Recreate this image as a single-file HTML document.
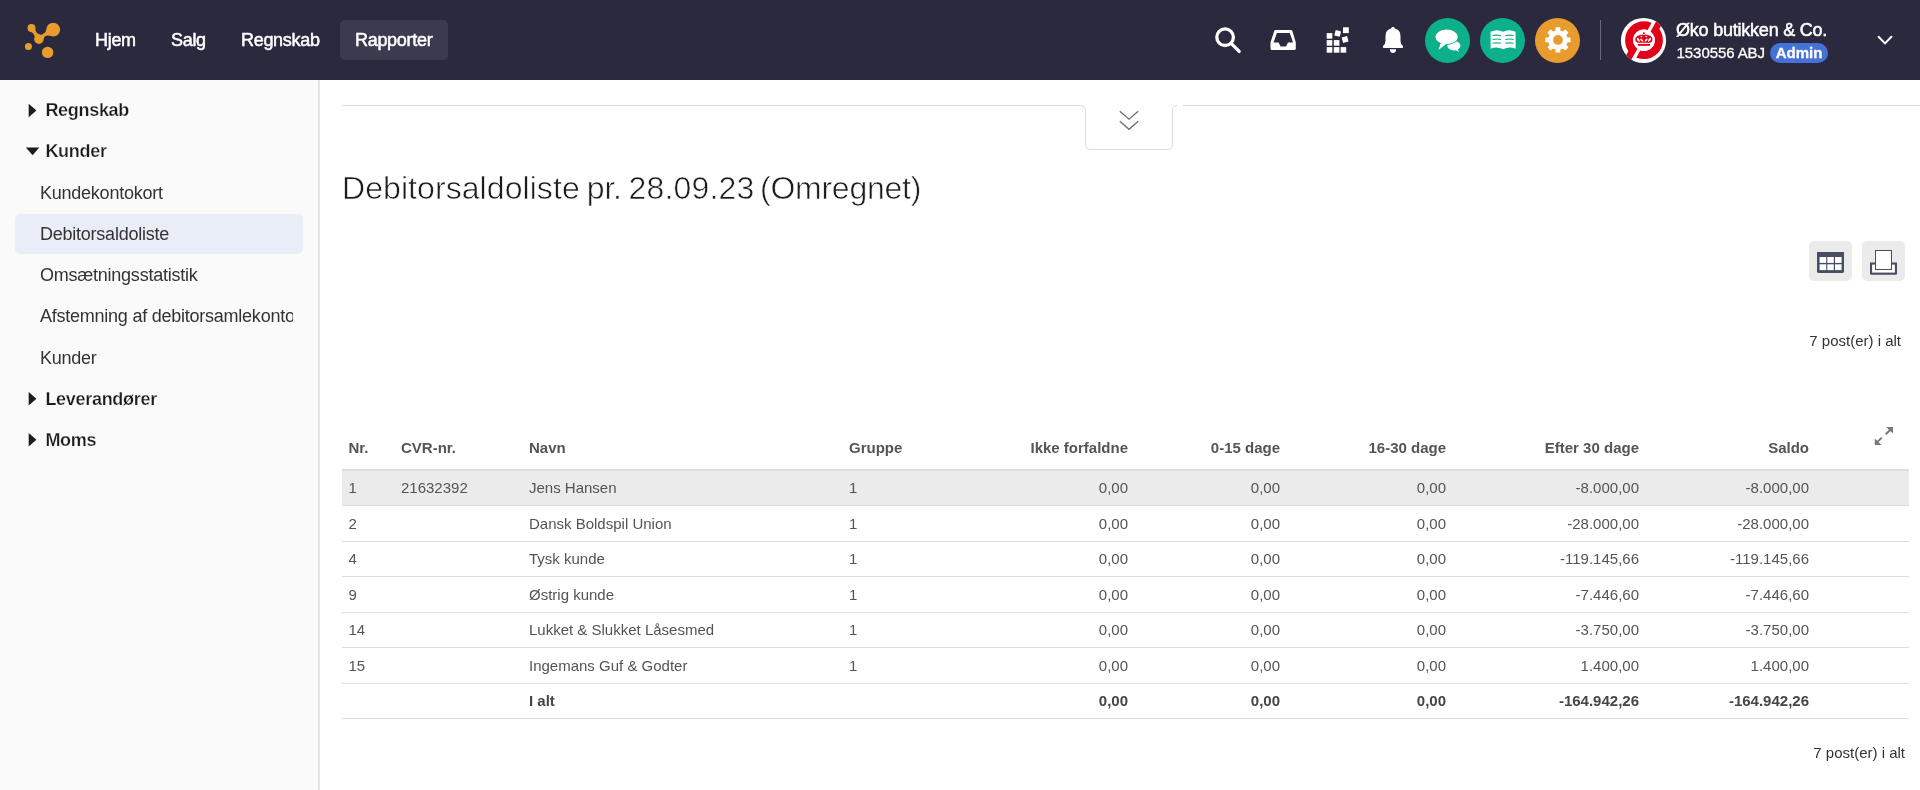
<!DOCTYPE html>
<html lang="da">
<head>
<meta charset="utf-8">
<title>Debitorsaldoliste</title>
<style>
*{box-sizing:border-box;margin:0;padding:0}
html,body{width:1920px;height:790px;overflow:hidden;background:#fff}
body{font-family:"Liberation Sans",Arial,sans-serif;color:#333;font-size:15px;position:relative}
#page{position:absolute;left:0;top:0;width:1920px;height:790px;overflow:hidden;background:#fff;will-change:transform}
.abs{position:absolute}
svg{position:absolute;display:block;overflow:visible}
#top{position:absolute;left:0;top:0;width:1920px;height:80px;background:#2b293e}
#top .nav{position:absolute;top:20px;height:40px;line-height:40px;color:#fff;font-size:18px;letter-spacing:-0.3px;white-space:nowrap;-webkit-text-stroke:0.5px #fff}
#top .nav.act{background:#3c3a4e;border-radius:5px}
.circ{position:absolute;top:18px;width:45px;height:45px;border-radius:50%}
#side{position:absolute;left:0;top:80px;width:320px;height:710px;background:#fafafa;border-right:2px solid #e4e4e4}
#side .h{position:absolute;left:45.4px;font-weight:bold;font-size:18px;color:#1c1c1c;-webkit-text-stroke:0.25px #fafafa;line-height:20px;white-space:nowrap;letter-spacing:-0.3px}
#side .i{position:absolute;left:40px;font-size:18px;color:#333;line-height:20px;white-space:nowrap;letter-spacing:-0.24px}
#side .sel{position:absolute;left:15px;top:134px;width:288px;height:40px;background:#e9edf7;border-radius:5px}
h1{position:absolute;left:342px;top:168px;font-weight:normal;font-size:32px;line-height:40px;color:#1c1c1c;white-space:nowrap;letter-spacing:-0.2px;-webkit-text-stroke:0.6px #fff}
.btn{position:absolute;top:241px;width:43px;height:40px;border-radius:5px;background:#ebebeb}
table{position:absolute;left:342px;top:427px;width:1567px;border-collapse:collapse;font-size:15px;color:#545454}
th{font-weight:bold;text-align:left;height:43px;padding:0 7px 2px;vertical-align:middle;border-bottom:2px solid #ddd;color:#555}
td{height:35.5px;padding:0 7px;vertical-align:middle;border-bottom:1px solid #ddd}
.r{text-align:right}
td.f{padding-left:6.5px}
tr.hl td{background:#ebebeb;padding-bottom:2px}
tr.tot td{font-weight:bold;color:#464646}
.cnt{position:absolute;font-size:15px;line-height:20px;color:#333;white-space:nowrap}
h1 span{position:absolute;top:0;left:0}
</style>
</head>
<body>
<div id="page">
<div id="top">
  <svg style="left:0;top:0" width="80" height="80" viewBox="0 0 80 80"><g fill="#e99c2e">
    <circle cx="31.5" cy="28" r="4"/>
    <circle cx="53.2" cy="29.7" r="6.9"/>
    <circle cx="38.9" cy="39.2" r="4.7"/>
    <circle cx="28.4" cy="46.4" r="3.5"/>
    <circle cx="47.6" cy="52.4" r="5.7"/>
    <path d="M35.1 28.7 Q35.8 33.6 40.8 34.9 L38.9 39.2 L34.6 39 Q35.4 33.8 30.2 31.5Z"/>
    <path d="M46.9 28.7 Q45.6 33.6 40.8 34.9 L38.9 39.2 L43.6 39 Q44.6 34.6 50.4 35.9Z"/>
  </g></svg>
  <div class="nav" style="left:95px">Hjem</div>
  <div class="nav" style="left:171px">Salg</div>
  <div class="nav" style="left:241px">Regnskab</div>
  <div class="nav act" style="left:340px;width:108px;padding-left:15px">Rapporter</div>
  <svg style="left:1200px;top:0" width="220" height="80" viewBox="1200 0 220 80">
    <g fill="none" stroke="#fff" stroke-width="3.3" stroke-linecap="round">
      <circle cx="1225.1" cy="37.2" r="8.3"/>
      <path d="M1231.4 43.6 L1239.2 51.4"/>
    </g>
    <path fill="#fff" fill-rule="evenodd" d="M1275.6 29.9 H1291 Q1292 29.9 1292.4 30.9 L1295.8 42.6 V48.6 Q1295.8 50.1 1294.3 50.1 H1272 Q1270.5 50.1 1270.5 48.6 V42.6 L1274.2 30.9 Q1274.6 29.9 1275.6 29.9Z M1276.9 33 L1273.6 42.4 H1278.6 L1280.6 46.6 H1286 L1288 42.4 H1293 L1289.8 33Z"/>
    <g fill="#fff">
      <rect x="1326.7" y="33.1" width="5.6" height="5.6"/>
      <rect x="1326.7" y="40.1" width="5.6" height="5.6"/>
      <rect x="1333.8" y="40.1" width="5.6" height="5.6"/>
      <rect x="1326.7" y="47.1" width="5.6" height="5.6"/>
      <rect x="1333.8" y="47.1" width="5.6" height="5.6"/>
      <rect x="1340.6" y="47.1" width="5.6" height="5.6"/>
      <rect x="1343" y="27.3" width="5.8" height="5.8"/>
      <rect x="-2.8" y="-2.8" width="5.6" height="5.6" transform="translate(1337.7 33.4) rotate(15)"/>
      <rect x="-2.8" y="-2.8" width="5.6" height="5.6" transform="translate(1345.1 39.5) rotate(-15)"/>
      <path d="M1393 26.8 Q1394.6 26.8 1394.8 28.6 Q1400.5 30 1400.5 36 V41 Q1400.5 44.5 1403 46 Q1403.6 47.9 1402.2 47.9 H1383.8 Q1382.4 47.9 1383 46 Q1385.5 44.5 1385.5 41 V36 Q1385.5 30 1391.2 28.6 Q1391.4 26.8 1393 26.8Z"/>
      <path d="M1389.8 49.3 H1396.2 Q1396 52.9 1393 52.9 Q1390 52.9 1389.8 49.3Z"/>
    </g>
  </svg>
  <div class="circ" style="left:1425px;background:#0cb08b"></div>
  <div class="circ" style="left:1480px;background:#0cb08b"></div>
  <div class="circ" style="left:1535px;background:#e99c2e"></div>
  <svg style="left:1420px;top:0" width="170" height="80" viewBox="1420 0 170 80">
    <g fill="#fff">
      <ellipse cx="1453.9" cy="45.7" rx="6.6" ry="4.7"/>
      <path d="M1454.6 49.4 L1459 52 L1457 48Z"/>
      <ellipse cx="1446.6" cy="37" rx="11.8" ry="7.9" fill="#0cb08b"/>
      <ellipse cx="1446.6" cy="36.8" rx="11.2" ry="7.3"/>
      <path d="M1441 42.5 L1438.4 50 L1447 43.5Z"/>
      <path d="M1490.6 31.8 Q1497 28.6 1503.1 31.8 Q1509.2 28.6 1515.6 31.8 V48.7 Q1509.2 46.2 1503.1 49.3 Q1497 46.2 1490.6 48.7Z"/>
    </g>
    <g fill="none" stroke="#0cb08b" stroke-width="1.15">
      <path d="M1492.6 35.7 Q1496.8 34.7 1501 35.7 M1492.6 39.5 Q1496.8 38.5 1501 39.5 M1492.6 43.3 Q1496.8 42.3 1501 43.3"/>
      <path d="M1505.2 35.7 Q1509.4 34.7 1513.6 35.7 M1505.2 39.5 Q1509.4 38.5 1513.6 39.5 M1505.2 43.3 Q1509.4 42.3 1513.6 43.3"/>
    </g>
    <g transform="translate(1557.95 39.95)">
      <circle r="7.3" fill="none" stroke="#fff" stroke-width="5"/>
      <g fill="#fff">
        <rect x="-2.4" y="-12.6" width="4.8" height="25.2" rx="0.6"/>
        <rect x="-2.4" y="-12.6" width="4.8" height="25.2" rx="0.6" transform="rotate(45)"/>
        <rect x="-2.4" y="-12.6" width="4.8" height="25.2" rx="0.6" transform="rotate(90)"/>
        <rect x="-2.4" y="-12.6" width="4.8" height="25.2" rx="0.6" transform="rotate(135)"/>
      </g>
      <circle r="4.9" fill="#e99c2e"/>
    </g>
  </svg>
  <div class="abs" style="left:1600px;top:20px;width:1px;height:40px;background:#6b6a7a"></div>
  <svg style="left:1621px;top:18px" width="45" height="45" viewBox="0 0 45 45">
    <defs><clipPath id="av"><circle cx="22.5" cy="22.5" r="22.6"/></clipPath></defs>
    <circle cx="22.5" cy="22.5" r="22.6" fill="#fff"/>
    <g clip-path="url(#av)">
      <path d="M31 17.3 L41.6 -2.2" stroke="#e2001a" stroke-width="6.8" fill="none"/>
      <path d="M14.6 27 L4 46.6" stroke="#e2001a" stroke-width="6.8" fill="none"/>
      <circle cx="23" cy="22.2" r="14.85" fill="none" stroke="#e2001a" stroke-width="8.1"/>
      <path d="M35.1 0 L10.9 44.4" stroke="#fff" stroke-width="3.3"/>
      <circle cx="23" cy="22.2" r="10.8" fill="#fff"/>
      <g fill="#e2001a">
        <rect x="16.75" y="25.9" width="12.3" height="1.9"/>
        <path d="M16.4 24.7 Q13.6 22.6 14.3 20.2 Q15.4 17.4 19 17 Q21.4 16.2 22.9 17 Q24.4 16.2 26.8 17 Q30.4 17.4 31.5 20.2 Q32.2 22.6 29.4 24.7Z"/>
        <circle cx="22.85" cy="15.3" r="1"/>
      </g>
      <g fill="#fff">
        <path d="M16.2 19.6 Q14.8 22.4 18.5 23.9 Q19.4 21.4 16.2 19.6Z"/>
        <path d="M29.6 19.6 Q31 22.4 27.3 23.9 Q26.4 21.4 29.6 19.6Z"/>
        <path d="M19.3 20.5 Q18.8 22.8 22.1 23.7 Q22.4 21.2 19.3 20.5Z"/>
        <path d="M26.5 20.5 Q27 22.8 23.7 23.7 Q23.4 21.2 26.5 20.5Z"/>
        <ellipse cx="20.4" cy="18.55" rx="1.1" ry="0.6"/>
        <ellipse cx="25.3" cy="18.55" rx="1.1" ry="0.6"/>
      </g>
    </g>
  </svg>
  <div class="abs" style="left:1676px;top:19px;font-size:18px;line-height:22px;color:#fff;letter-spacing:-0.22px;-webkit-text-stroke:0.5px #fff;white-space:nowrap">Øko butikken &amp; Co.</div>
  <div class="abs" style="left:1676.6px;top:43px;font-size:15px;line-height:20px;color:#fff;letter-spacing:-0.08px;-webkit-text-stroke:0.3px #fff;white-space:nowrap">1530556 ABJ</div>
  <div class="abs" style="left:1770px;top:43px;width:58px;height:20px;border-radius:10px;background:#4472d6;color:#fff;font-weight:bold;font-size:15px;line-height:20px;text-align:center;white-space:nowrap;-webkit-text-stroke:0.3px #fff">Admin</div>
  <svg style="left:1870px;top:30px" width="30" height="20" viewBox="1870 30 30 20"><path d="M1878.6 36.8 L1885 43.4 L1891.4 36.8" fill="none" stroke="#fff" stroke-width="2" stroke-linecap="round" stroke-linejoin="miter"/></svg>
</div>
<div id="side">
  <svg style="left:0;top:0" width="60" height="380" viewBox="0 80 60 380"><g fill="#1c1c1c">
    <path d="M28.7 103.8 L36.4 110.5 L28.7 117.2Z"/>
    <path d="M25.9 147.6 L39.3 147.6 L32.6 155.2Z"/>
    <path d="M28.7 392.1 L36.4 398.8 L28.7 405.5Z"/>
    <path d="M28.7 433.1 L36.4 439.8 L28.7 446.5Z"/>
  </g></svg>
  <div class="h" style="top:20px">Regnskab</div>
  <div class="h" style="top:61px">Kunder</div>
  <div class="sel"></div>
  <div class="i" style="top:103px">Kundekontokort</div>
  <div class="i" style="top:144px">Debitorsaldoliste</div>
  <div class="i" style="top:185px">Omsætningsstatistik</div>
  <div class="i" style="top:226px;width:253.2px;overflow:hidden">Afstemning af debitorsamlekonto</div>
  <div class="i" style="top:268px">Kunder</div>
  <div class="h" style="top:309px">Leverandører</div>
  <div class="h" style="top:350px">Moms</div>
</div>
<svg style="left:320px;top:80px" width="1600" height="80" viewBox="320 80 1600 80">
  <path d="M342 105.5 H1080.5 Q1085.5 105.5 1085.5 110.5 V144.5 Q1085.5 149.5 1090.5 149.5 H1167.5 Q1172.5 149.5 1172.5 144.5 V110.5 Q1172.5 105.5 1177.5 105.5 M1183 105.5 H1920" fill="none" stroke="#dcdcdc" stroke-width="1"/>
  <path d="M1119.8 111.2 L1129 119.2 L1138.2 111.2 M1119.8 121.3 L1129 129.3 L1138.2 121.3" fill="none" stroke="#6e6e6e" stroke-width="1.3"/>
</svg>
<h1><span style="letter-spacing:0.07px">Debitorsaldoliste</span> <span style="left:244.8px">pr.</span> <span style="left:286.4px;letter-spacing:0.2px">28.09.23</span> <span style="left:418px;letter-spacing:-0.25px">(Omregnet)</span></h1>
<div class="btn" style="left:1809px"></div>
<div class="btn" style="left:1862px"></div>
<svg style="left:1800px;top:232px" width="120" height="60" viewBox="1800 232 120 60">
  <path d="M1817 252 H1844 V271.6 Q1844 273 1842.6 273 H1818.4 Q1817 273 1817 271.6Z" fill="#484d63"/>
  <g fill="#fff">
    <rect x="1819.6" y="257" width="6.6" height="5.9"/><rect x="1827.3" y="257" width="6.5" height="5.9"/><rect x="1835" y="257" width="6.6" height="5.9"/>
    <rect x="1819.6" y="264.3" width="6.6" height="5.8"/><rect x="1827.3" y="264.3" width="6.5" height="5.8"/><rect x="1835" y="264.3" width="6.6" height="5.8"/>
  </g>
  <path d="M1870 262.4 H1897 V273.4 Q1897 274.8 1895.6 274.8 H1871.4 Q1870 274.8 1870 273.4Z" fill="#484d63"/>
  <rect x="1872.1" y="264.6" width="22.8" height="8" fill="#fff"/>
  <rect x="1875.5" y="250.5" width="16" height="19" fill="#fff" stroke="#484d63" stroke-width="1"/>
</svg>
<div class="cnt" style="right:19px;top:331px">7 post(er) i alt</div>
<table>
<colgroup><col style="width:52px"><col style="width:128px"><col style="width:320px"><col style="width:120px"><col style="width:173px"><col style="width:152px"><col style="width:166px"><col style="width:193px"><col style="width:170px"><col></colgroup>
<thead><tr><th style="padding-left:6.5px">Nr.</th><th>CVR-nr.</th><th>Navn</th><th>Gruppe</th><th class="r">Ikke forfaldne</th><th class="r">0-15 dage</th><th class="r">16-30 dage</th><th class="r">Efter 30 dage</th><th class="r">Saldo</th><th></th></tr></thead>
<tbody>
<tr class="hl"><td class="f">1</td><td>21632392</td><td>Jens Hansen</td><td>1</td><td class="r">0,00</td><td class="r">0,00</td><td class="r">0,00</td><td class="r">-8.000,00</td><td class="r">-8.000,00</td><td></td></tr>
<tr><td class="f">2</td><td></td><td>Dansk Boldspil Union</td><td>1</td><td class="r">0,00</td><td class="r">0,00</td><td class="r">0,00</td><td class="r">-28.000,00</td><td class="r">-28.000,00</td><td></td></tr>
<tr><td class="f">4</td><td></td><td>Tysk kunde</td><td>1</td><td class="r">0,00</td><td class="r">0,00</td><td class="r">0,00</td><td class="r">-119.145,66</td><td class="r">-119.145,66</td><td></td></tr>
<tr><td class="f">9</td><td></td><td>Østrig kunde</td><td>1</td><td class="r">0,00</td><td class="r">0,00</td><td class="r">0,00</td><td class="r">-7.446,60</td><td class="r">-7.446,60</td><td></td></tr>
<tr><td class="f">14</td><td></td><td>Lukket &amp; Slukket Låsesmed</td><td>1</td><td class="r">0,00</td><td class="r">0,00</td><td class="r">0,00</td><td class="r">-3.750,00</td><td class="r">-3.750,00</td><td></td></tr>
<tr><td class="f">15</td><td></td><td>Ingemans Guf &amp; Godter</td><td>1</td><td class="r">0,00</td><td class="r">0,00</td><td class="r">0,00</td><td class="r">1.400,00</td><td class="r">1.400,00</td><td></td></tr>
<tr class="tot"><td class="f"></td><td></td><td>I alt</td><td></td><td class="r">0,00</td><td class="r">0,00</td><td class="r">0,00</td><td class="r">-164.942,26</td><td class="r">-164.942,26</td><td></td></tr>
</tbody>
</table>
<svg style="left:1870px;top:420px" width="30" height="30" viewBox="1870 420 30 30"><g fill="#777">
  <path d="M1886.1 427.1 H1893 V433.6Z M1874.8 438.6 V445 H1881.4Z"/>
  <path d="M1890.4 428.6 L1891.6 429.9 L1886.4 435 L1885 433.6Z M1877.2 443.4 L1876 442.1 L1881 436.9 L1882.4 438.2Z"/>
</g></svg>
<div class="cnt" style="right:15px;top:743px">7 post(er) i alt</div>
</div>
</body>
</html>
